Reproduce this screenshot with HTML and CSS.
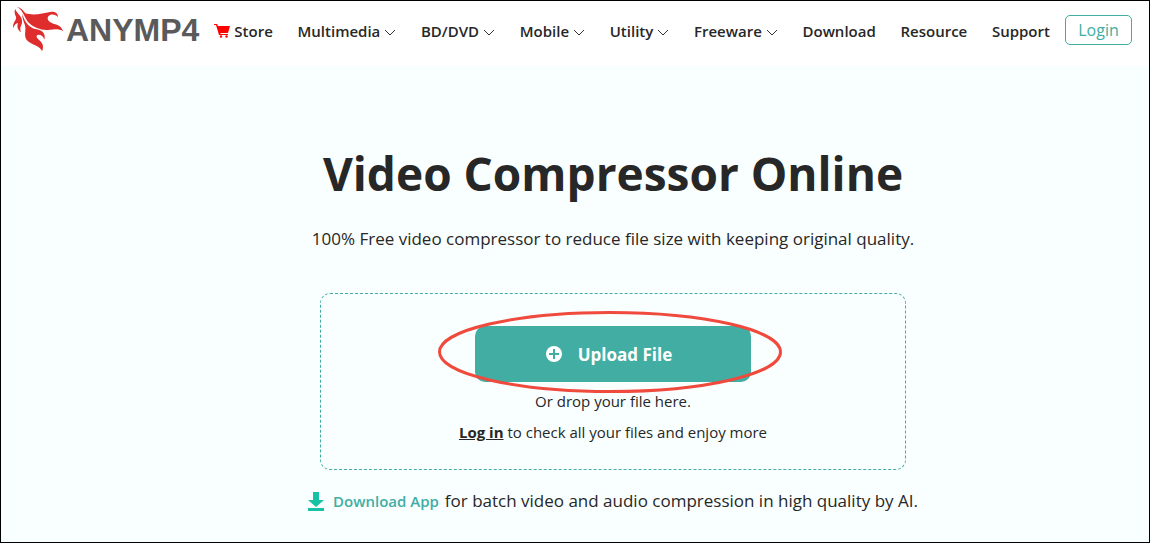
FILE: index.html
```html
<!DOCTYPE html>
<html lang="en">
<head>
<meta charset="utf-8">
<meta name="viewport" content="width=device-width, initial-scale=1">
<title>Video Compressor Online</title>
<link rel="stylesheet" href="styles.css">
</head>
<body>
<header class="header">
  <a class="logo" href="#">
    <svg class="flame" viewBox="36 18 156 138" aria-hidden="true">
      <path d="M51 20C62 23 70 31 76 40C98 47 130 41 150 36C165 32 174 39 174 52C166 41 151 42 145 49C139 57 147 67 160 71C176 74 185 81 190 94C179 86 164 87 150 89C128 93 103 84 88 70C74 57 72 33 51 20Z"/>
      <path d="M46 27C50 42 69 48 66 68C64 78 58 82 63 97C51 88 51 79 54 69C48 70 42 75 40 85C36 66 51 61 48 50C44 43 42 34 46 27Z"/>
      <path d="M67 41C73 66 88 84 110 88C128 91 138 103 133 119C130 107 117 101 111 106C106 113 117 119 124 127C131 136 130 145 126 154C121 139 98 135 84 124C68 110 80 94 75 76C71 64 66 55 67 41Z"/>
    </svg>
    <span>ANYMP4</span>
  </a>
  <nav class="nav" aria-label="Main">
    <a class="store" href="#"><svg class="cart" viewBox="0 0 16 14" aria-hidden="true"><path d="M0 0h3l1 2h12l-2 7H6l1 1h7v1H5L2 1H0z"/><circle cx="7" cy="12.500" r="1.200"/><circle cx="12.500" cy="12.500" r="1.200"/></svg>Store</a>
    <a href="#">Multimedia<svg class="chevron" viewBox="0 0 12 8" aria-hidden="true"><path d="M1 1l5 5 5-5"/></svg></a>
    <a href="#">BD/DVD<svg class="chevron" viewBox="0 0 12 8" aria-hidden="true"><path d="M1 1l5 5 5-5"/></svg></a>
    <a href="#">Mobile<svg class="chevron" viewBox="0 0 12 8" aria-hidden="true"><path d="M1 1l5 5 5-5"/></svg></a>
    <a href="#">Utility<svg class="chevron" viewBox="0 0 12 8" aria-hidden="true"><path d="M1 1l5 5 5-5"/></svg></a>
    <a href="#">Freeware<svg class="chevron" viewBox="0 0 12 8" aria-hidden="true"><path d="M1 1l5 5 5-5"/></svg></a>
    <a href="#">Download</a>
    <a href="#">Resource</a>
    <a href="#">Support</a>
  </nav>
  <button class="login" type="button">Login</button>
</header>
<main class="main">
  <h1 class="title">Video Compressor Online</h1>
  <p class="lead">100% Free video compressor to reduce file size with keeping original quality.</p>
  <section class="drop">
    <div class="upload-wrap">
      <button class="upload" type="button">
        <svg class="plus" viewBox="0 0 16 16" aria-hidden="true"><circle cx="8" cy="8" r="8"/><path d="M8 3v10M3 8h10"/></svg>
        Upload File
      </button>
      <svg class="ring" viewBox="0 0 344 82" aria-hidden="true"><ellipse cx="172" cy="41" rx="170.500" ry="39.500"/></svg>
    </div>
    <p class="note">Or drop your file here.</p>
    <p class="note"><a class="signin" href="#">Log in</a> to check all your files and enjoy more</p>
  </section>
  <p class="app">
    <svg class="down" viewBox="0 0 16 19" aria-hidden="true"><path d="M5 0h6v8h5l-8 7-8-7h5zM0 16h16v3H0z"/></svg>
    <a class="app-link" href="#">Download App</a>
    <span>for batch video and audio compression in high quality by AI.</span>
  </p>
</main>
</body>
</html>
```

FILE: styles.css
```css
* {
  box-sizing: border-box;
}

body {
  margin: 0;
  min-height: 100vh;
  display: flex;
  flex-direction: column;
  border: 1px solid #000;
  background: #f9fffe;
  color: #272727;
  font-family: "Segoe UI", "Open Sans", "Noto Sans", sans-serif;
}

h1,
p {
  margin: 0;
}

button {
  font-family: inherit;
  cursor: pointer;
}

.header {
  display: flex;
  align-items: flex-start;
  padding: 5px 17px 0 11px;
  min-height: 65px;
  background: #fff;
}

.logo {
  display: flex;
  gap: 2px;
  color: #5a5a5a;
  font: bold 32px/48px "Liberation Sans", Arial, sans-serif;
  text-decoration: none;
}

.flame {
  width: 52px;
  height: 46px;
  fill: #df2c2d;
}

.nav {
  flex: 1;
  display: flex;
  justify-content: space-between;
  margin: 13px 15px 0;
}

.nav a {
  display: flex;
  align-items: center;
  gap: 4px;
  color: #272727;
  font-size: 15px;
  font-weight: 600;
  line-height: 24px;
  text-decoration: none;
}

.cart {
  width: 16px;
  height: 14px;
  fill: #f00;
}

.chevron {
  width: 12px;
  height: 8px;
  margin-top: 4px;
  fill: none;
  stroke: #333;
}

.login {
  margin-top: 9px;
  width: 67px;
  height: 30px;
  padding: 0;
  border: 1px solid #41ada3;
  border-radius: 5px;
  background: #fff;
  color: #41ada3;
  font-size: 16px;
  line-height: 28px;
}

.main {
  display: flex;
  flex-direction: column;
  align-items: center;
  padding: 75px 0 0 76px;
}

.title {
  font-size: 46px;
  font-weight: 700;
  line-height: 64px;
}

.lead {
  margin-top: 20px;
  font-size: 17px;
  line-height: 28px;
}

.drop {
  display: flex;
  flex-direction: column;
  align-items: center;
  width: 586px;
  max-width: 100%;
  margin-top: 40px;
  padding: 32px 16px 21px;
  border: 1px dashed #41ada3;
  border-radius: 10px;
}

.upload-wrap {
  position: relative;
  margin-bottom: 4px;
}

.upload {
  display: flex;
  align-items: center;
  justify-content: center;
  gap: 16px;
  width: 276px;
  height: 56px;
  padding: 0 8px 0 0;
  border: 0;
  border-radius: 10px;
  background: #41ada3;
  color: #fff;
  font-size: 17px;
  font-weight: 700;
}

.plus {
  width: 16px;
  height: 16px;
  fill: #fff;
  stroke: #41ada3;
  stroke-width: 2;
}

.plus circle {
  stroke: none;
}

.ring {
  position: absolute;
  top: -15px;
  left: -37px;
  width: 344px;
  height: 82px;
  fill: none;
  stroke: #ef4a3d;
  stroke-width: 3;
  pointer-events: none;
}

.note {
  font-size: 15px;
  line-height: 31px;
}

.signin {
  color: #272727;
  font-weight: 700;
}

.app {
  display: flex;
  align-items: center;
  margin-top: 17px;
  font-size: 17px;
  line-height: 28px;
}

.down {
  width: 16px;
  height: 19px;
  margin-right: 9px;
  fill: #15c2a5;
}

.app-link {
  margin-right: 6px;
  color: #41ada3;
  font-size: 15px;
  font-weight: 600;
  text-decoration: none;
}
```
